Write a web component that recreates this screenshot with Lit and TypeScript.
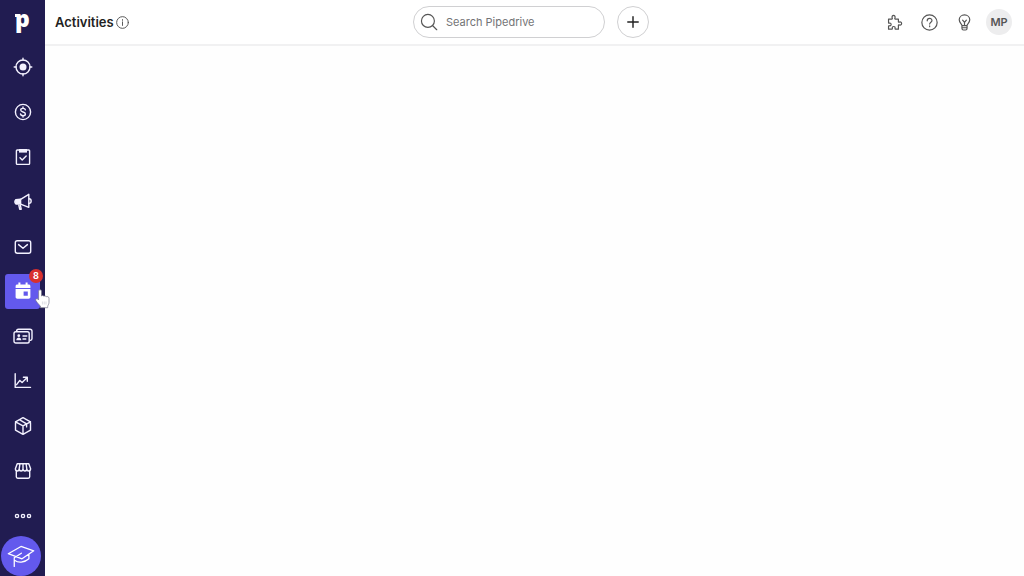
import { LitElement, html, css, svg } from "lit";
import { customElement, property } from "lit/decorators.js";

const icons = {
  leads: svg`<circle cx="10" cy="10" r="7"/><circle cx="10" cy="10" r="3.5" fill="currentColor" stroke="none"/><path d="M10 1.200v2M10 16.800v2M1.200 10h2M16.800 10h2"/>`,
  deals: svg`<circle cx="10" cy="10" r="7.600"/><path d="M12.400 7.900c-.2-1-1.100-1.500-2.400-1.500-1.400 0-2.300.6-2.300 1.700 0 2.600 4.700 1.100 4.700 3.800 0 1.100-1 1.800-2.400 1.800-1.400 0-2.300-.6-2.500-1.700M10 5v1.400M10 13.700V15"/>`,
  projects: svg`<rect x="3.400" y="3" width="13.200" height="14.400" rx=".8"/><path d="M6 2h8v3.600H6z" fill="currentColor" stroke="none"/><path d="M7 10.800l2.200 2.100 4-4"/>`,
  campaigns: svg`<path d="M7.600 7.300l8.200-5v13l-8.200-3.200"/><path d="M2.800 7.800l4.800-.5v4.800H3C1.800 11 1.800 9 2.800 7.800z" fill="currentColor"/><path d="M5.800 13.200l.9 4h1.500l-.8-3.800M16 6.800c2.900.2 2.900 4.400 0 4.600"/>`,
  mail: svg`<rect x="2.300" y="3.800" width="15.400" height="12.400" rx="2"/><path d="M5.600 7.600L10 11.300l4.400-3.700"/>`,
  activities: svg`<path fill="currentColor" stroke="none" fill-rule="evenodd" d="M4.400 3.400h1V1.600h2v1.800h5.200V1.600h2v1.800h1c1.100 0 1.800.7 1.800 1.700v1.900H2.600V5.100c0-1 .7-1.700 1.800-1.700zM2.600 8h14.800v8c0 1-.7 1.700-1.800 1.700H4.400c-1.100 0-1.800-.7-1.800-1.700zm8 2.600v4.200h4.200v-4.200z"/>`,
  contacts: svg`<rect x="1" y="5.800" width="15.200" height="11.200" rx="1.800"/><path d="M3.600 5.400c0-1.400.7-2.100 1.900-2.100h11.400c1.300 0 2.100.8 2.100 2v7.200c0 1.100-.6 1.700-1.500 1.900"/><circle cx="5.800" cy="9.700" r="1.400" fill="currentColor" stroke="none"/><path d="M3.300 14.200c0-3.700 5-3.700 5 0z" fill="currentColor" stroke="none"/><path d="M10 10h3.800M10 13h2.800"/>`,
  insights: svg`<path d="M2.200 2.800v13.600h15.300M3.600 13.700l3.200-4.300 2.300 2.200 4.600-4.600M10.400 6.300h3.900v3.900"/>`,
  products: svg`<path d="M10 1.600l7.500 4.200v8.400L10 18.400l-7.500-4.200V5.800zM2.500 5.800L10 9.900l7.500-4.100M10 9.900v8.500M6.300 3.700l7.300 4.200v3"/>`,
  marketplace: svg`<path d="M4.200 2.800h11.600l1.800 5c0 2.900-3.800 2.900-3.800 0 0 2.900-3.800 2.900-3.800 0 0 2.900-3.800 2.900-3.800 0 0 2.900-3.800 2.900-3.800 0zM6.900 2.800l-.7 5M10 2.800v5M13.100 2.800l.7 5M3.300 10v5.800c0 .9.500 1.400 1.400 1.400h10.600c.9 0 1.400-.5 1.400-1.400V10"/>`,
  more: svg`<circle cx="4" cy="10" r="1.600"/><circle cx="10" cy="10" r="1.600"/><circle cx="16" cy="10" r="1.600"/>`,
  academy: svg`<path d="M1 9.200l10-5.700 10 3.400-9.200 6.300zM11.300 8.800l-5.600 3.600v6.800M6.200 14.600c2.500 1.900 7.300 1.900 11-1.400V9.600"/>`,
  search: svg`<circle cx="8.800" cy="8.800" r="7.200"/><path d="M13.900 13.900l4.700 4.700"/>`,
  plus: svg`<path d="M10 4.200v11.600M4.200 10h11.600"/>`,
  info: svg`<circle cx="10" cy="10" r="9"/><path d="M10 9v5.500M10 5.500v1.200"/>`,
  puzzle: svg`<path d="M3 6h3.800c.7 0 .8-.6.500-1.100C5.800.600 12 .600 10.500 4.900c-.3.500-.2 1.100.5 1.100h3.600v3c0 .6.500.8 1 .5 3.700-1.500 3.700 4.800 0 3.300-.5-.3-1-.1-1 .5v4.500h-3.500c-.6 0-.7-.5-.5-1 .9-2.800-4-2.800-3.100 0 .2.500.1 1-.5 1H3v-3.500c0-.6.500-.7 1-.5 2.700.9 2.700-3.900 0-3-.5.200-1 .1-1-.5z"/>`,
  help: svg`<circle cx="10" cy="10" r="9"/><path d="M7.300 8c0-3.800 5.600-3.700 5.600-.4 0 2.100-2.700 2.100-2.700 4.300M10.200 14v1"/>`,
  bulb: svg`<path d="M7 13.600c0-2-3.200-3.100-3.200-6.700C3.800 3.500 6.500 1.100 10 1.100s6.200 2.400 6.200 5.800c0 3.600-3.200 4.700-3.200 6.700zM7 13.600v3.100c0 1.400.7 2.100 1.800 2.100h2.400c1.100 0 1.800-.7 1.800-2.100v-3.100M7 16.200h6M10 13.400V9.800M7.800 7.200L10 9.800l2.200-2.600"/>`,
};
type IconName = keyof typeof icons;

@customElement("app-icon")
class AppIcon extends LitElement {
  @property() name: IconName = "leads";
  static styles = css`
    :host { display: block; width: 20px; height: 20px; }
    .glyph { display: block; width: 100%; height: 100%; fill: none; stroke: currentColor;
      stroke-width: var(--icon-stroke, 1.4); stroke-linecap: round; stroke-linejoin: round; }
  `;
  render() {
    const size = this.name === "academy" ? 22 : 20;
    return html`<svg class="glyph" viewBox="0 0 ${size} ${size}" aria-hidden="true">${icons[this.name]}</svg>`;
  }
}

const sections: { icon: IconName; label: string; badge?: number }[] = [
  { icon: "leads", label: "Leads" },
  { icon: "deals", label: "Deals" },
  { icon: "projects", label: "Projects" },
  { icon: "campaigns", label: "Campaigns" },
  { icon: "mail", label: "Mail" },
  { icon: "activities", label: "Activities", badge: 8 },
  { icon: "contacts", label: "Contacts" },
  { icon: "insights", label: "Insights" },
  { icon: "products", label: "Products" },
  { icon: "marketplace", label: "Marketplace" },
];

@customElement("side-nav")
class SideNav extends LitElement {
  static styles = css`
    :host { display: flex; flex-direction: column; background: #211c51; color: #fff; }
    .links { flex: 1; display: flex; flex-direction: column; }
    .cell { flex: 1; display: flex; align-items: center; justify-content: center; }
    .item { position: relative; display: flex; align-items: center; justify-content: center; box-sizing: border-box;
      width: 35px; height: 35px; padding: 0; border: 0; border-radius: 3px; background: none; color: #f3f1ff; }
    .item.active { background: #6359ed; color: #fff; }
    .logo { position: relative; color: #fff; text-decoration: none; font: 800 23px/24px "Open Sans", sans-serif; margin-top: -8px; }
    .logo::before { content: ""; position: absolute; left: 0; top: 8px; width: 4px; height: 3px; background: #fff; }
    .badge { position: absolute; right: -3px; top: -5px; width: 14px; height: 14px; border-radius: 50%;
      background: #d9302e; color: #fff; text-align: center; font: 700 9px/14px Inter, sans-serif; }
    .pointer { position: absolute; left: 30px; top: 15px; width: 15px; height: 20px; z-index: 2; }
    .foot { height: 38px; display: flex; align-items: flex-end; padding-left: 1px; }
    .academy { flex: none; display: flex; align-items: center; justify-content: center; width: 40px; height: 40px;
      padding: 0; border: 0; border-radius: 50%; background: #6359ed; color: #fff; }
    .academy app-icon { width: 28px; height: 28px; --icon-stroke: 1; }
  `;
  render() {
    return html`
      <nav class="links" aria-label="Main">
        <div class="cell"><a class="logo" href="#" aria-label="Pipedrive">p</a></div>
        ${sections.map((s) => html`
          <div class="cell">
            <a class="item ${s.badge ? "active" : ""}" href="#" aria-label=${s.label}>
              <app-icon name=${s.icon}></app-icon>
              ${s.badge ? html`<span class="badge">${s.badge}</span>
                <svg class="pointer" viewBox="0 0 15 20" aria-hidden="true">
                  <path d="M3.600 2.300c0-2 2.900-2 2.900 0V7c.6-.8 2-.7 2.400.3.600-.7 2-.5 2.300.5.900-.7 2.800-.1 2.800 1.500v4c0 2-1.200 3-1.300 4.200v1.200H5.400v-1.400c-1-1.500-3.100-3.400-4.500-5.700-.8-1.500.9-2.500 1.900-1.500l.8.800z"
                    fill="#fff" stroke="#77768a" stroke-width=".7"/>
                  <path d="M7.400 12.500v3M9.200 12.500v3M11 12.500v3" stroke="#b9b8c4" stroke-width=".5"/>
                </svg>` : ""}
            </a>
          </div>`)}
        <div class="cell"><button class="item" aria-label="More"><app-icon name="more"></app-icon></button></div>
      </nav>
      <div class="foot"><button class="academy" aria-label="Academy"><app-icon name="academy"></app-icon></button></div>
    `;
  }
}

@customElement("top-bar")
class TopBar extends LitElement {
  static styles = css`
    :host { display: grid; grid-template-columns: 1fr auto 1fr; align-items: center; min-height: 44px;
      padding: 0 12px 0 10px; border-bottom: 2px solid #f1f1f2; background: #fff; color: #222; }
    button { padding: 0; border: 0; background: none; color: #555; }
    .start { display: flex; align-items: center; gap: 2px; }
    .title { margin: 0; font-size: 13px; line-height: 20px; font-weight: 600; color: #1f1f22; }
    .info app-icon { width: 13px; height: 13px; --icon-stroke: 1.5; }
    .middle { display: flex; align-items: center; gap: 12px; padding-right: 5px; }
    .search { box-sizing: border-box; display: flex; align-items: center; gap: 8px; width: 192px; height: 32px;
      padding: 0 8px 0 6px; border: 1px solid #d0d0d2; border-radius: 16px; color: #555; }
    .search app-icon { flex: none; width: 18px; height: 18px; --icon-stroke: 1.3; }
    .field { flex: 1; min-width: 0; padding: 0; border: 0; outline: 0; background: none; font: 11px/20px Inter, sans-serif; color: #333; }
    .field::placeholder { color: #737376; opacity: 1; }
    .add { display: flex; align-items: center; justify-content: center; width: 32px; height: 32px;
      border: 1px solid #d0d0d2; border-radius: 50%; color: #222; }
    .add app-icon { width: 18px; height: 18px; --icon-stroke: 1.6; }
    .end { display: flex; align-items: center; justify-content: flex-end; gap: 18px; }
    .tool app-icon { width: 17px; height: 17px; --icon-stroke: 1.4; }
    .avatar { width: 26px; height: 26px; margin-left: -5px; border-radius: 50%; background: #ededee; color: #555;
      font: 600 11px/26px Inter, sans-serif; text-align: center; }
  `;
  render() {
    return html`
      <div class="start">
        <h1 class="title">Activities</h1>
        <button class="info" aria-label="About activities"><app-icon name="info"></app-icon></button>
      </div>
      <div class="middle">
        <label class="search">
          <app-icon name="search"></app-icon>
          <input class="field" type="text" placeholder="Search Pipedrive" aria-label="Search Pipedrive">
        </label>
        <button class="add" aria-label="Quick add"><app-icon name="plus"></app-icon></button>
      </div>
      <div class="end">
        <button class="tool" aria-label="Integrations"><app-icon name="puzzle"></app-icon></button>
        <button class="tool" aria-label="Help"><app-icon name="help"></app-icon></button>
        <button class="tool" aria-label="Tips"><app-icon name="bulb"></app-icon></button>
        <button class="avatar" aria-label="MP account">MP</button>
      </div>
    `;
  }
}

@customElement("app-root")
class AppRoot extends LitElement {
  static styles = css`
    :host { display: grid; grid-template-columns: 45px 1fr; min-height: 100vh; background: #fefefe;
      font-family: Inter, "Liberation Sans", sans-serif; }
    .page { display: flex; flex-direction: column; min-width: 0; }
    .content { flex: 1; }
  `;
  render() {
    return html`
      <side-nav></side-nav>
      <div class="page">
        <top-bar></top-bar>
        <main class="content"></main>
      </div>
    `;
  }
}
